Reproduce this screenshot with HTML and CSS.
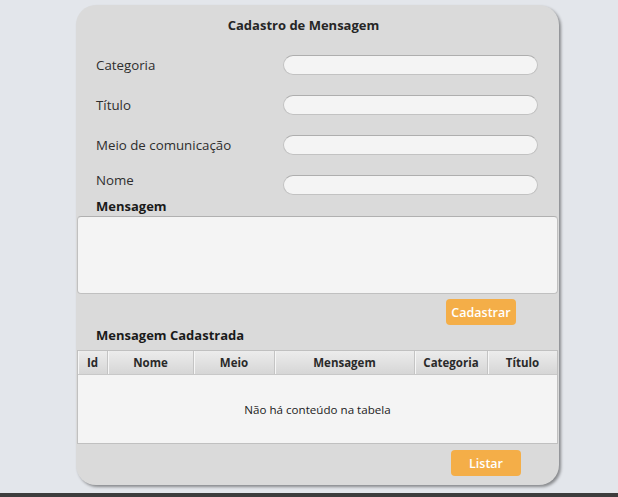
FILE: index.html
```html
<!DOCTYPE html>
<html lang="pt">
<head>
<meta charset="utf-8">
<title>Cadastro de Mensagem</title>
<link rel="stylesheet" href="styles.css">
</head>
<body>
<div class="card">
  <div class="title">Cadastro de Mensagem</div>
  <div class="row"><span class="label">Categoria</span><span class="input"></span></div>
  <div class="row"><span class="label">Título</span><span class="input"></span></div>
  <div class="row"><span class="label">Meio de comunicação</span><span class="input"></span></div>
  <div class="row row-nome"><span class="label">Nome</span><span class="input"></span></div>
  <div class="section">Mensagem</div>
  <div class="textarea"></div>
  <div class="actions"><button class="btn btn-cad">Cadastrar</button></div>
  <div class="section section-list">Mensagem Cadastrada</div>
  <div class="table">
    <div class="thead">
      <div class="th c-id">Id</div>
      <div class="th c-nome">Nome</div>
      <div class="th c-meio">Meio</div>
      <div class="th c-msg">Mensagem</div>
      <div class="th c-cat">Categoria</div>
      <div class="th c-tit">Título</div>
    </div>
    <div class="tbody">Não há conteúdo na tabela</div>
  </div>
  <div class="actions actions-list"><button class="btn btn-list">Listar</button></div>
</div>
<div class="strip"></div>
</body>
</html>
```
FILE: styles.css
```css
html, body {
  margin: 0;
  padding: 0;
}
body {
  background: #e3e6eb;
  width: 618px;
  height: 497px;
  overflow: hidden;
  font-family: "Open Sans", "Noto Sans", sans-serif;
  color: #333333;
}
.card {
  box-sizing: border-box;
  margin: 5px 0 0 76px;
  width: 483px;
  height: 480px;
  background: #dadada;
  border-radius: 20px;
  box-shadow: 2px 2px 3px rgba(0, 0, 0, 0.4);
  display: flex;
  flex-direction: column;
}
.title {
  font-weight: 700;
  font-size: 13px;
  text-align: center;
  height: 20px;
  line-height: 20px;
  margin-top: 10px;
  padding-right: 28px;
  color: #262626;
}
.row {
  display: flex;
  align-items: center;
  height: 20px;
  margin-top: 20px;
  padding-left: 20px;
}
.label {
  width: 187px;
  font-size: 13.3px;
  color: #2e2e2e;
}
.row-nome .label {
  position: relative;
  top: -5px;
}
.input {
  display: block;
  box-sizing: border-box;
  width: 255px;
  height: 20px;
  border-radius: 10px;
  background: #f4f4f4;
  border: 1px solid #c2c2c2;
  border-top-color: #aeaeae;
}
.section {
  font-weight: 700;
  font-size: 13px;
  padding-left: 20px;
  height: 18px;
  line-height: 17px;
  margin-top: 3px;
  color: #1a1a1a;
}
.textarea {
  box-sizing: border-box;
  margin: 0 1px;
  height: 78px;
  background: #f4f4f4;
  border: 1px solid #c0c0c0;
  border-top-color: #b0b0b0;
  border-radius: 4px;
}
.actions {
  display: flex;
  justify-content: flex-end;
  padding-right: 43px;
  margin-top: 5px;
}
.btn {
  box-sizing: border-box;
  width: 70px;
  height: 26px;
  border: none;
  border-radius: 4px;
  background: #f4ae48;
  color: #ffffff;
  font-family: "Open Sans", "Noto Sans", sans-serif;
  font-weight: 600;
  font-size: 12.5px;
  padding: 0;
}
.section-list {
  margin-top: 0;
  height: 20px;
  line-height: 20px;
}
.table {
  margin: 5px 1px 0 1px;
  border-left: 1px solid #c0c0c0;
  border-right: 1px solid #c0c0c0;
}
.thead {
  display: flex;
  height: 24px;
  background: linear-gradient(#ececec, #d6d6d6);
  border-top: 1px solid #c0c0c0;
  box-sizing: border-box;
}
.th {
  box-sizing: border-box;
  font-weight: 700;
  font-size: 11.5px;
  color: #2a2a2a;
  text-align: center;
  line-height: 23px;
  border-right: 1px solid #c4c4c4;
  box-shadow: inset 1px 0 0 #f6f6f6;
}
.th:last-child { border-right: none; }
.c-id { width: 30px; }
.c-nome { width: 86px; }
.c-meio { width: 81px; }
.c-msg { width: 140px; }
.c-cat { width: 73px; }
.c-tit { flex: 1; }
.tbody {
  height: 70px;
  background: #f4f4f4;
  display: flex;
  align-items: center;
  justify-content: center;
  font-size: 11.6px;
  color: #222;
  border-bottom: 1px solid #c0c0c0;
  box-sizing: border-box;
  border-top: 1px solid #c8c8c8;
}
.actions-list {
  padding-right: 38px;
  margin-top: 6px;
}
.strip {
  margin-top: 8px;
  height: 4px;
  background: #3d3d3d;
}
```
